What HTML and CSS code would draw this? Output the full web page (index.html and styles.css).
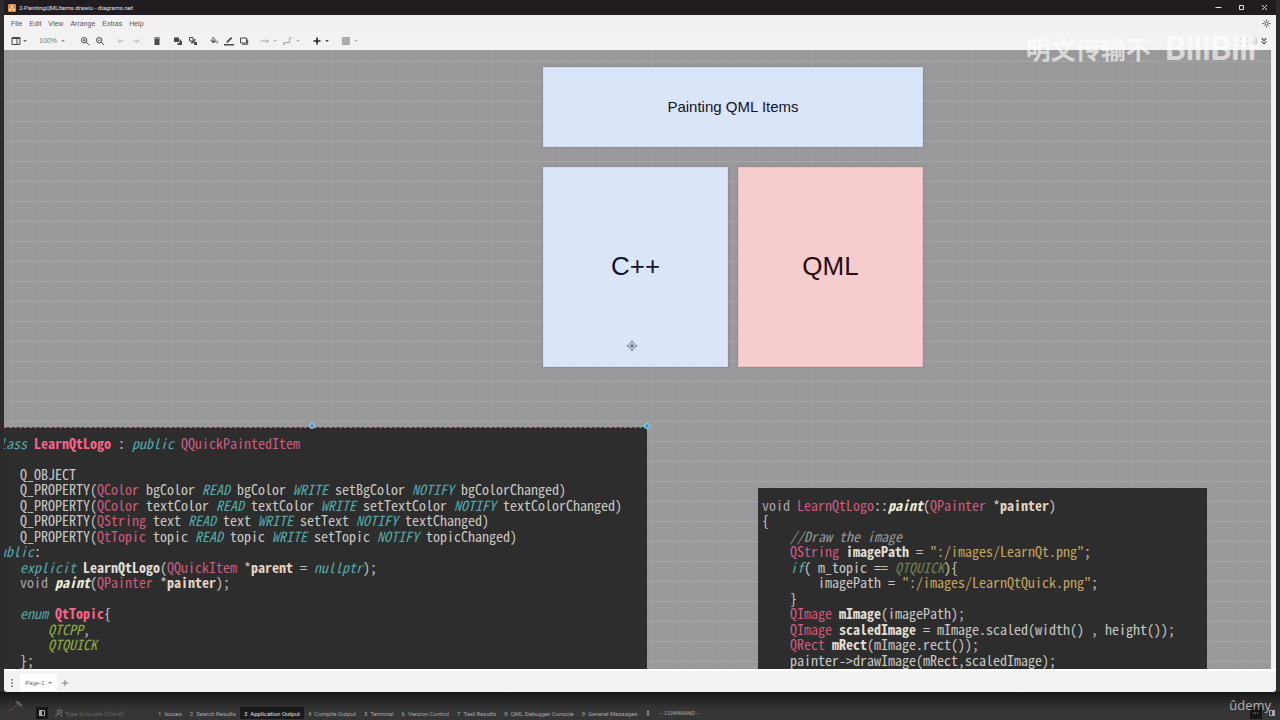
FILE: index.html
```html
<!DOCTYPE html>
<html lang="en">
<head>
  <meta charset="UTF-8" />
  <title>2-PaintingQMLItems.drawio - diagrams.net</title>
  <link rel="stylesheet" href="styles.css">
</head>
<body>

  <div class="window">
    <header class="titlebar">
      <svg class="app-icon" viewBox="0 0 8 8"><rect width="8" height="8" rx="1" fill="#e58a35"/><path d="M4 2.5L2.3 5.5M4 2.5L5.7 5.5" stroke="#fff" stroke-width=".7"/><path d="M3 1.2h2v1.6H3zM1.2 5h2v1.6h-2zM4.8 5h2v1.6h-2z" fill="#fff"/></svg>
      <span class="title">2-PaintingQMLItems.drawio - diagrams.net</span>
      <div class="window-buttons">
        <button aria-label="Minimize"><svg viewBox="0 0 7 7"><path d="M.5 3.5h6"/></svg></button>
        <button aria-label="Maximize"><svg viewBox="0 0 7 7"><path d="M1.5 1.5h4v4h-4z"/></svg></button>
        <button aria-label="Close"><svg viewBox="0 0 7 7"><path d="M1 1l5 5M6 1L1 6"/></svg></button>
      </div>
    </header>

    <nav class="menubar">
      <button>File</button>
      <button>Edit</button>
      <button>View</button>
      <button>Arrange</button>
      <button>Extras</button>
      <button>Help</button>
      <button class="appearance" aria-label="Appearance"><svg viewBox="0 0 9 9"><circle cx="4.5" cy="4.5" r="1.5"/><path d="M4.5 .5v1.5M4.5 7v1.5M.5 4.5h1.5M7 4.5h1.5M1.7 1.7l1 1M6.3 6.3l1 1M7.3 1.7l-1 1M2.7 6.3l-1 1"/></svg></button>
    </nav>

    <div class="toolbar">
      <div class="group view">
        <button aria-label="View"><svg viewBox="0 0 10 10"><path d="M1 1.5h8v7H1zM6 1.5v7M1 2.5h8"/></svg><i class="caret"></i></button>
      </div>
      <div class="group">
        <button class="zoom">100%<i class="caret"></i></button>
      </div>
      <div class="group">
        <button aria-label="Zoom in"><svg viewBox="0 0 10 10"><circle cx="4.2" cy="4.2" r="2.7"/><path d="M6.2 6.2L9 9M3 4.2h2.4M4.2 3v2.4"/></svg></button>
        <button aria-label="Zoom out"><svg viewBox="0 0 10 10"><circle cx="4.2" cy="4.2" r="2.7"/><path d="M6.2 6.2L9 9M3 4.2h2.4"/></svg></button>
      </div>
      <div class="group faded">
        <button aria-label="Undo"><svg viewBox="0 0 10 10"><path d="M2.5 3v3h3M2.5 6C4 4 6 4 8 5.5"/></svg></button>
        <button aria-label="Redo"><svg viewBox="0 0 10 10"><path d="M7.5 3v3h-3M7.5 6C6 4 4 4 2 5.5"/></svg></button>
      </div>
      <div class="group">
        <button aria-label="Delete"><svg viewBox="0 0 10 10"><path class="solid" d="M2.5 3h5v6h-5zM2 1.5h2L4.5 1h1l.5.5h2v1H2z"/></svg></button>
      </div>
      <div class="group">
        <button aria-label="To front"><svg viewBox="0 0 10 10"><path class="solid" d="M1 1.5h5v4.5H1zM6.5 3.5H8V5H9v4H4.5V7H6.5z"/></svg></button>
        <button aria-label="To back"><svg viewBox="0 0 10 10"><path d="M1.5 1.5h3.5v3.5H1.5z"/><path class="solid" d="M6 3h1.5v1.5L4.5 7.5H3V6l3-1.5zM6 6h3v3H6z"/></svg></button>
      </div>
      <div class="group">
        <button aria-label="Fill color"><svg viewBox="0 0 10 10"><path d="M3.5 1L7 4.5 4.5 7 2 4.5 4.5 2"/><path class="solid" d="M2 4.5h5L4.5 7zM8.2 5l.8 1.5c0 1-1.5 1-1.5 0z"/></svg></button>
        <button aria-label="Line color"><svg viewBox="0 0 10 10"><path class="solid" d="M2.5 5.5L7 1l1.3 1.3-4.5 4.5H2.5zM0 8h10v1.5H0z"/></svg></button>
        <button aria-label="Shadow"><svg viewBox="0 0 10 10"><path d="M1.5 2h6v5h-6z"/><path d="M3 8.2h5.7V3.5"/></svg></button>
      </div>
      <div class="group light">
        <button class="drop" aria-label="Connection"><svg viewBox="0 0 10 10"><path d="M.5 5h8M6.5 3.5L8.5 5l-2 1.5"/></svg><i class="caret"></i></button>
        <button class="drop" aria-label="Waypoints"><svg viewBox="0 0 10 10"><path d="M1 9V6.5h5.5V2H9M0 8h2"/></svg><i class="caret"></i></button>
      </div>
      <div class="group insert">
        <button class="drop" aria-label="Insert"><svg viewBox="0 0 10 10"><path stroke-width="1.6" d="M5 1.5v7M1.5 5h7"/></svg><i class="caret"></i></button>
      </div>
      <div class="group light">
        <button class="drop" aria-label="Table"><svg viewBox="0 0 10 10"><path fill="#bbb" d="M1.5 1.5h7v7h-7zM1.5 4h7M1.5 6.5h7M4 1.5v7M6.5 1.5v7"/></svg><i class="caret"></i></button>
      </div>
      <div class="group panels">
        <button class="faded" aria-label="Fullscreen"><svg viewBox="0 0 10 10"><path d="M1 3V1.5h1.5M7.5 1.5H9V3M9 7v1.5H7.5M2.5 8.5H1V7"/></svg></button>
        <button class="faded" aria-label="Format"><svg viewBox="0 0 10 10"><path d="M2 1.5h6v7H2zM5.5 1.5v7"/></svg></button>
        <button aria-label="Collapse"><svg viewBox="0 0 10 10"><path stroke-width="1.4" d="M2 1.5l3 3 3-3M2 5.5l3 3 3-3"/></svg></button>
      </div>
    </div>

    <main class="canvas">
      <div class="node blue heading">Painting QML Items</div>
      <div class="node blue cpp">C++</div>
      <div class="node red qml">QML</div>

      <svg class="cursor" viewBox="0 0 12 12"><path d="M6 1v10M1 6h10M4.5 2.5L6 1l1.5 1.5M4.5 9.5L6 11l1.5-1.5M2.5 4.5L1 6l1.5 1.5M9.5 4.5L11 6 9.5 7.5M3 3l6 6M9 3L3 9"/></svg>

      <div class="code header-code">
        <div><em>class</em> <b class="type">LearnQtLogo</b> : <em>public</em> <span class="type">QQuickPaintedItem</span></div>
        <div></div>
        <div>    Q_OBJECT</div>
        <div>    Q_PROPERTY(<span class="type">QColor</span> bgColor <em>READ</em> bgColor <em>WRITE</em> setBgColor <em>NOTIFY</em> bgColorChanged)</div>
        <div>    Q_PROPERTY(<span class="type">QColor</span> textColor <em>READ</em> textColor <em>WRITE</em> setTextColor <em>NOTIFY</em> textColorChanged)</div>
        <div>    Q_PROPERTY(<span class="type">QString</span> text <em>READ</em> text <em>WRITE</em> setText <em>NOTIFY</em> textChanged)</div>
        <div>    Q_PROPERTY(<span class="type">QtTopic</span> topic <em>READ</em> topic <em>WRITE</em> setTopic <em>NOTIFY</em> topicChanged)</div>
        <div><em>public</em>:</div>
        <div>    <em>explicit</em> <b>LearnQtLogo</b>(<span class="type">QQuickItem</span> *<b class="param">parent</b> = <em>nullptr</em>);</div>
        <div>    <span class="void">void</span> <b class="method">paint</b>(<span class="type">QPainter</span> *<b class="param">painter</b>);</div>
        <div></div>
        <div>    <em>enum</em> <b class="type">QtTopic</b>{</div>
        <div>        <i class="value">QTCPP</i>,</div>
        <div>        <i class="value">QTQUICK</i></div>
        <div>    };</div>
      </div>
      <span class="handle middle"></span>
      <span class="handle corner"></span>

      <div class="code paint-code">
        <div><span class="void">void</span> <span class="type">LearnQtLogo</span>::<b class="method">paint</b>(<span class="type">QPainter</span> *<b class="param">painter</b>)</div>
        <div>{</div>
        <div>    <i class="comment">//Draw the image</i></div>
        <div>    <span class="type">QString</span> <b>imagePath</b> = <span class="string">":/images/LearnQt.png"</span>;</div>
        <div>    <em>if</em>( m_topic == <i class="value dim">QTQUICK</i>){</div>
        <div>        imagePath = <span class="string">":/images/LearnQtQuick.png"</span>;</div>
        <div>    }</div>
        <div>    <span class="type">QImage</span> <b>mImage</b>(imagePath);</div>
        <div>    <span class="type">QImage</span> <b>scaledImage</b> = mImage.scaled(width() , height());</div>
        <div>    <span class="type">QRect</span> <b>mRect</b>(mImage.rect());</div>
        <div>    painter-&gt;drawImage(mRect,scaledImage);</div>
      </div>
    </main>

    <footer class="pages">
      <button aria-label="Pages"><svg viewBox="0 0 10 10"><path class="solid" d="M4 0h2v2H4zM4 4h2v2H4zM4 8h2v2H4z"/></svg></button>
      <button class="page">Page-1<i class="caret"></i></button>
      <button aria-label="Insert page"><svg viewBox="0 0 10 10"><path d="M5 1v8M1 5h8"/></svg></button>
    </footer>
  </div>

  <div class="ide">
    <svg class="hammer" viewBox="0 0 16 12"><path d="M1 11L10 4" stroke="#7a4c35"/><path d="M7 2l3-1 4 4-1 2-3-3z" fill="#69696c" stroke="none"/></svg>
    <button class="sidebar" aria-label="Sidebar"><svg viewBox="0 0 8 8"><path d="M1.5 1.5h5v5h-5z"/><path class="solid" d="M1 1h3v6H1z"/></svg></button>
    <label class="locator">
      <svg viewBox="0 0 8 8"><circle cx="4.5" cy="3" r="2"/><path d="M3 4.5L.5 7.5M5.5 7h2"/></svg>
      <input type="text" placeholder="Type to locate (Ctrl+K)" aria-label="Locate">
    </label>
    <div class="panes">
      <button><span>1</span>Issues</button>
      <button><span>2</span>Search Results</button>
      <button class="active"><span>3</span>Application Output</button>
      <button><span>4</span>Compile Output</button>
      <button><span>5</span>Terminal</button>
      <button><span>6</span>Version Control</button>
      <button><span>7</span>Test Results</button>
      <button><span>8</span>QML Debugger Console</button>
      <button><span>9</span>General Messages</button>
    </div>
    <button class="more" aria-label="More"><svg viewBox="0 0 8 8"><path class="solid" d="M4 1l1.5 2.5h-3zM4 7l1.5-2.5h-3z"/></svg></button>
    <span class="mode">-- COMMAND --</span>
    <button class="progress" aria-label="Progress"><svg viewBox="0 0 8 8"><path d="M1 4h6" stroke-dasharray="1 1"/></svg></button>
    <button class="right-bar" aria-label="Right sidebar"><svg viewBox="0 0 8 8"><path d="M1.5 1.5h5v5h-5z"/><path class="solid" d="M4 1h3v6H4z"/></svg></button>
  </div>

  <div class="watermark">
    <span lang="zh">明文传输不</span>
    <span class="site">BiliBili</span>
  </div>
  <div class="brand">ûdemy</div>

</body>
</html>
```
FILE: styles.css
```css
* {
  box-sizing: border-box;
}
body {
  position: relative;
  display: flex;
  flex-direction: column;
  height: 100vh;
  margin: 0;
  overflow: hidden;
  background-color: #2c2a2d;
  font-family: "Liberation Sans", Arial, sans-serif;
  font-size: 7px;
}
button {
  display: flex;
  align-items: center;
  justify-content: center;
  padding: 0;
  border: 0;
  background: none;
  color: inherit;
  font: inherit;
}
svg {
  flex: none;
  width: 10px;
  height: 10px;
  fill: none;
  stroke: currentColor;
}
.solid {
  fill: currentColor;
  stroke: none;
}
.caret {
  border: 2px solid transparent;
  border-top-color: currentColor;
  border-bottom: 0;
  opacity: 0.8;
}

/* window */
.window {
  display: flex;
  flex: 1;
  flex-direction: column;
  min-height: 0;
  margin: 0 4px;
  border-radius: 0 0 3px 3px;
  overflow: hidden;
  background-color: #f1f2f2;
}
.titlebar {
  display: flex;
  align-items: center;
  gap: 3px;
  height: 15px;
  padding-left: 4px;
  background-color: #211c20;
  color: #e4e2e4;
  font-family: Roboto, "Liberation Sans", sans-serif;
  font-size: 6px;
}
.app-icon {
  width: 8px;
  height: 8px;
  stroke: none;
}
.window-buttons {
  display: flex;
  margin-left: auto;
}
.window-buttons button {
  width: 23px;
}
.window-buttons svg {
  width: 7px;
  height: 7px;
}
.menubar {
  display: flex;
  align-items: center;
  gap: 7px;
  height: 16px;
  padding: 0 5px 0 7px;
  background-color: #f3f0f2;
  color: #555;
}
.appearance {
  margin-left: auto;
}
.appearance svg {
  width: 9px;
  height: 9px;
}
.toolbar {
  display: flex;
  align-items: center;
  gap: 6px;
  height: 19px;
  padding: 0 7px 0 6px;
  color: #484848;
}
.group {
  display: flex;
}
.group button {
  width: 15px;
  height: 12px;
}
.group.view button {
  width: 17px;
  gap: 2px;
}
.group .zoom {
  width: 38px;
  gap: 4px;
  color: #777;
}
.group .drop {
  width: 23px;
  gap: 3px;
}
.faded {
  opacity: 0.3;
}
.light {
  color: #a5a5a5;
}
.insert {
  color: #222;
}
.panels {
  margin-left: auto;
}
.group.panels button {
  width: 10px;
}
.panels svg {
  width: 8px;
  height: 8px;
}

/* drawing area */
.canvas {
  position: relative;
  flex: 1;
  min-height: 0;
  margin-right: 5px;
  overflow: hidden;
  background-color: #99989a;
  background-image:
    linear-gradient(#a6a6a7 1px, transparent 1px),
    linear-gradient(90deg, #a1a1a3 1px, transparent 1px),
    linear-gradient(90deg, #9c9b9e 1px, transparent 1px);
  background-position: 0 11px, 8px 0, 8px 0;
  background-size: 20px 20px, 160px 100%, 20px 100%;
}
.node {
  position: absolute;
  display: flex;
  align-items: center;
  justify-content: center;
  padding-bottom: 2px;
  font-size: 26px;
}
.blue {
  border: 1px solid #d3dced;
  background-color: #dae5fa;
  color: #101426;
  box-shadow: 0 0 2px #777e96;
}
.red {
  border: 1px solid #eabfc2;
  background-color: #f5cdcf;
  color: #260b0d;
  box-shadow: 0 0 2px #94777b;
}
.heading {
  top: 17px;
  left: 539px;
  width: 380px;
  height: 80px;
  font-size: 15px;
}
.cpp {
  top: 117px;
  left: 539px;
  width: 185px;
  height: 200px;
}
.qml {
  top: 117px;
  left: 734px;
  width: 185px;
  height: 200px;
}
.cursor {
  position: absolute;
  top: 290px;
  left: 622px;
  width: 12px;
  height: 12px;
  color: #555c6c;
  stroke-width: 0.7;
}
.code {
  position: absolute;
  display: grid;
  grid-auto-rows: 15px 16px;
  align-content: start;
  background-color: #2d2d2d;
  color: #c9c9c4;
  font-family: "Noto Sans Mono CJK SC", "Liberation Mono", monospace;
  font-size: 14px;
  line-height: 16px;
  white-space: pre;
}
.header-code {
  top: 377px;
  bottom: 0;
  left: -20px;
  width: 663px;
  padding: 7px 0 0 8px;
  border-top: 1px dashed #4a9da0;
}
.paint-code {
  top: 438px;
  bottom: 0;
  left: 754px;
  width: 449px;
  padding: 9px 0 0 4px;
}
.code em {
  color: #55aaa9;
}
.code b {
  color: #e0ddd4;
}
.code .type {
  color: #cc5c80;
}
.code b.type {
  color: #f5648b;
}
.code .param {
  color: #e4d3c1;
}
.code .method {
  color: #efeedb;
  font-style: italic;
}
.void {
  color: #a6a3a5;
}
.value {
  color: #8fae45;
}
.dim {
  color: #718052;
}
.comment {
  color: #9a9a9a;
}
.string {
  color: #c6a45f;
}
.handle {
  position: absolute;
  width: 6px;
  height: 6px;
  border: 1px solid #a4d9ec;
  border-radius: 50%;
  background-color: #3699c8;
}
.middle {
  top: 373px;
  left: 305px;
}
.corner {
  top: 373px;
  left: 640px;
}

/* page tabs */
.pages {
  display: flex;
  align-items: center;
  height: 23px;
  padding: 2px 0 0 2px;
  border-top: 2px solid #fff;
  color: #666;
}
.pages button {
  width: 12px;
  height: 17px;
}
.pages .page {
  width: 37px;
  margin: 0 2px;
  gap: 3px;
  background-color: #fff;
  font-size: 6px;
}
.pages svg {
  width: 8px;
  height: 8px;
}

/* editor status bar behind the window */
.ide {
  display: flex;
  align-items: flex-end;
  height: 28px;
  padding: 0 2px 1px 8px;
  background: linear-gradient(#171717, #353535 60%);
  color: #a8a8a8;
  font-family: Roboto, "Liberation Sans", sans-serif;
  font-size: 6px;
}
.ide button,
.locator {
  height: 12px;
}
.ide svg {
  width: 8px;
  height: 8px;
}
.ide .hammer {
  align-self: center;
  width: 16px;
  height: 12px;
}
.sidebar {
  width: 12px;
  margin-left: 12px;
  background-color: #181818;
}
.locator {
  display: flex;
  align-items: center;
  gap: 2px;
  width: 98px;
  margin-left: 6px;
  padding-left: 1px;
  color: #888;
}
.locator input {
  width: 80px;
  padding: 0;
  border: 0;
  background: none;
  color: inherit;
  font: inherit;
}
.locator input::placeholder {
  color: #6c6c6c;
}
.panes {
  display: flex;
  margin-left: 2px;
}
.panes button {
  gap: 3px;
  padding: 0 4px;
}
.panes .active {
  background-color: #1a1a1a;
  color: #e0e0e0;
}
.more {
  width: 12px;
}
.mode {
  margin-left: 6px;
  line-height: 12px;
}
.progress {
  width: 12px;
  margin-left: auto;
  background-color: #151515;
}
.right-bar {
  width: 12px;
  margin-left: 4px;
}

/* overlays */
.watermark {
  position: absolute;
  top: 30px;
  right: 24px;
  display: flex;
  align-items: center;
  gap: 14px;
  color: rgba(255, 255, 255, 0.65);
  font-family: "Noto Sans CJK SC", sans-serif;
  font-size: 25px;
  font-weight: bold;
  line-height: 36px;
}
.site {
  font-family: Lato, sans-serif;
  font-size: 32px;
  font-weight: 900;
}
.brand {
  position: absolute;
  right: 9px;
  bottom: 6px;
  color: #b0b0b0;
  font-family: "Open Sans", sans-serif;
  font-size: 13px;
  line-height: 18px;
}
```
